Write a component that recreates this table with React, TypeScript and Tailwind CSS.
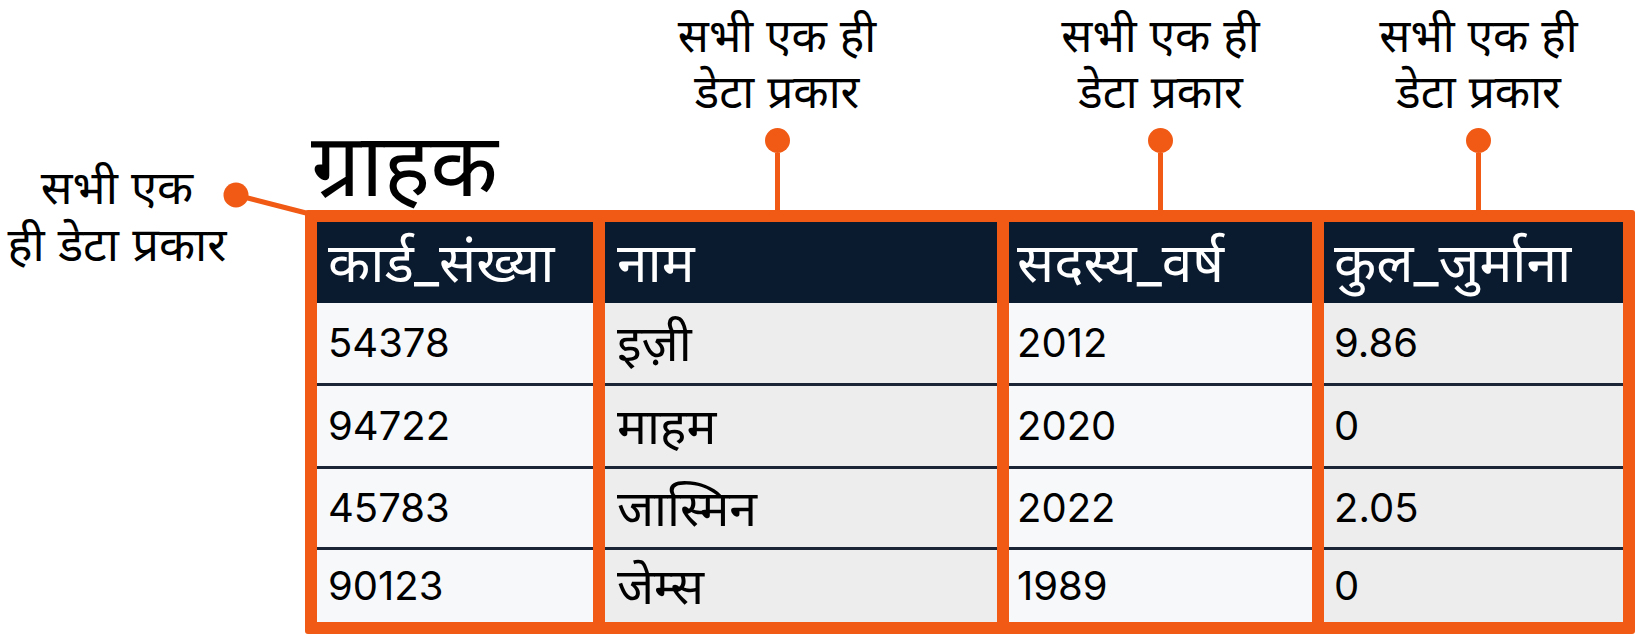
import React from 'react';

const font = { fontFamily: 'Inter, "Noto Sans Devanagari", "Noto Sans", sans-serif' };

const columns = [
  { w: 'w-[276px]', bg: 'bg-[#F7F8FA]', head: 'कार्ड_संख्या', cells: ['54378', '94722', '45783', '90123'], pad: 'pl-[11px]', size: 'text-[40px]' },
  { w: 'w-[392px]', bg: 'bg-[#EDEDED]', head: 'नाम', cells: ['इज़ी', 'माहम', 'जास्मिन', 'जेम्स'], pad: 'pl-[12px]', size: 'text-[50px]' },
  { w: 'w-[303px]', bg: 'bg-[#F7F8FA]', head: 'सदस्य_वर्ष', cells: ['2012', '2020', '2022', '1989'], pad: 'pl-[8px]', size: 'text-[40px]' },
  { w: 'w-[299px]', bg: 'bg-[#EDEDED]', head: 'कुल_जुर्माना', cells: ['9.86', '0', '2.05', '0'], pad: 'pl-[10px]', size: 'text-[40px]' },
];

const rowHeights = ['h-[80px]', 'h-[83px]', 'h-[81px]', 'h-[75px]'];

function Callout({ shift }: { shift: string }) {
  return (
    <div className={`flex h-full flex-col items-center pt-[7px] ${shift}`}>
      <div className="text-center text-[46px] leading-[56px] text-black">
        <div>सभी एक ही</div>
        <div>डेटा प्रकार</div>
      </div>
      <div className="mt-[9px] h-[25px] w-[25px] rounded-full bg-[#F05A14]" />
      <div className="w-[5px] flex-1 bg-[#F05A14]" />
    </div>
  );
}

export default function App() {
  return (
    <div className="relative flex h-[640px] w-[1635px] overflow-hidden bg-white" style={font}>
      {/* left annotation */}
      <div className="w-[305px] shrink-0 pt-[158px]">
        <div className="w-[234px] text-center text-[47px] leading-[57px] text-black">
          <div>सभी एक</div>
          <div className="whitespace-nowrap">ही डेटा प्रकार</div>
        </div>
      </div>
      <svg className="pointer-events-none absolute left-0 top-0" width="330" height="240">
        <line x1="236" y1="195" x2="310" y2="214" stroke="#F05A14" strokeWidth="5" />
        <circle cx="236" cy="195" r="12.5" fill="#F05A14" />
      </svg>

      <div className="flex w-[1330px] shrink-0 flex-col">
        {/* top area: title + callouts */}
        <div className="flex h-[210px] gap-[12px] px-[12px]">
          <div className={`${columns[0].w} flex items-end pb-[2px]`}>
            <div className="-ml-[6px] text-[88px] leading-none text-black">ग्राहक</div>
          </div>
          <div className={columns[1].w}>
            <Callout shift="pr-[48px]" />
          </div>
          <div className={columns[2].w}>
            <Callout shift="" />
          </div>
          <div className={columns[3].w}>
            <Callout shift="pl-[10px]" />
          </div>
        </div>

        {/* table */}
        <div className="flex gap-[12px] rounded-[3px] bg-[#F05A14] p-[12px]">
          {columns.map((col) => (
            <div key={col.head} className={`${col.w} flex flex-col`}>
              <div className={`flex h-[81px] items-center bg-[#0B1B2F] ${col.pad} whitespace-nowrap text-[55px] leading-none text-white`}>
                {col.head}
              </div>
              {col.cells.map((c, i) => (
                <div
                  key={i}
                  className={`${rowHeights[i]} ${col.bg} ${col.pad} ${col.size} flex items-center leading-none text-black ${i > 0 ? 'border-t-[3px] border-[#1B2535]' : ''}`}
                >
                  {c}
                </div>
              ))}
            </div>
          ))}
        </div>
      </div>
    </div>
  );
}
